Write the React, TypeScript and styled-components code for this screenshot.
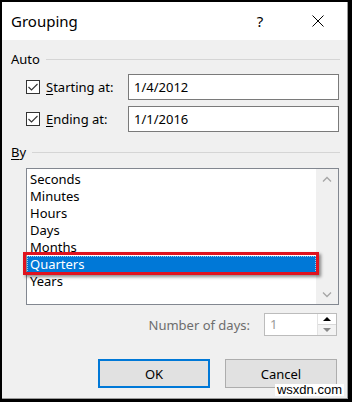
import React from "react";
import styled, { createGlobalStyle } from "styled-components";

const GlobalStyle = createGlobalStyle`
  html, body {
    margin: 0;
    padding: 0;
    background: #000;
  }
  body {
    font-family: "Noto Sans", "Open Sans", sans-serif;
    font-size: 13px;
    color: #000;
  }
`;

const units = ["Seconds", "Minutes", "Hours", "Days", "Months", "Quarters", "Years"];
const selectedUnit = "Quarters";

const Frame = styled.div`
  width: 352px;
  height: 402px;
  box-sizing: border-box;
  border-style: solid;
  border-color: #000;
  border-width: 2px 4px 3px 2px;
  position: relative;
`;

const Dialog = styled.div`
  height: 100%;
  box-sizing: border-box;
  display: flex;
  flex-direction: column;
  background: #f0f0f0;
  border-right: 1px solid #9a9a9a;
  border-bottom: 1px solid #9a9a9a;
`;

const TitleBar = styled.div`
  height: 38px;
  flex: none;
  display: flex;
  align-items: center;
  background: #fff;
  padding-left: 9px;
`;

const Title = styled.div`
  flex: 1;
  font-size: 15px;
  margin-top: -1px;
`;

const TitleButton = styled.div<{ $w: number; $gap?: number }>`
  width: ${(p) => p.$w}px;
  margin-left: ${(p) => p.$gap ?? 0}px;
  height: 38px;
  display: flex;
  align-items: center;
  justify-content: center;
  font-size: 15px;
`;

const Body = styled.div`
  flex: 1;
  display: flex;
  flex-direction: column;
  padding: 11px 8px 0 9px;
`;

const GroupHeader = styled.div`
  display: flex;
  align-items: center;
  height: 16px;
  line-height: 16px;
  &::after {
    content: "";
    flex: 1;
    height: 1px;
    background: #d5d5d5;
    margin: 0 -1px 0 6px;
  }
`;

const Underline = styled.span`
  text-decoration: underline;
  text-underline-offset: 2px;
`;

const DateRow = styled.div<{ $top: number }>`
  display: flex;
  align-items: center;
  height: 26px;
  margin-top: ${(p) => p.$top}px;
  padding-left: 15px;
`;

const CheckBox = styled.div`
  width: 14px;
  height: 14px;
  box-sizing: border-box;
  border: 1px solid #333;
  background: #fff;
  display: flex;
  align-items: center;
  justify-content: center;
  flex: none;
`;

const RowLabel = styled.label`
  width: 82px;
  margin-left: 6px;
  flex: none;
`;

const TextField = styled.div`
  flex: 1;
  height: 100%;
  box-sizing: border-box;
  border: 1px solid #7a7a7a;
  background: #fff;
  display: flex;
  align-items: center;
  padding-left: 5px;
`;

const ByHeader = styled(GroupHeader)`
  margin-top: 12px;
`;

const ListBox = styled.div`
  margin: 8px 0 0 15px;
  height: 137px;
  box-sizing: border-box;
  border: 1px solid #828790;
  background: #fff;
  display: flex;
`;

const Items = styled.div`
  flex: 1;
  padding-top: 2px;
`;

const Item = styled.div<{ $selected?: boolean }>`
  position: relative;
  height: 17px;
  line-height: 17px;
  padding-left: 3px;
  background: ${(p) => (p.$selected ? "#0078d7" : "transparent")};
  color: ${(p) => (p.$selected ? "#fff" : "#000")};
  outline: ${(p) => (p.$selected ? "1px dotted #9cc8f0" : "none")};
  outline-offset: -1px;
`;

const Highlight = styled.div`
  position: absolute;
  left: -4px;
  top: -4px;
  right: -3px;
  bottom: -2px;
  border: 3px solid #e0131f;
  box-shadow: 2px 2px 3px rgba(0, 0, 0, 0.45);
  pointer-events: none;
`;

const ScrollBar = styled.div`
  width: 22px;
  background: #f0f0f0;
  display: flex;
  flex-direction: column;
  justify-content: space-between;
  align-items: center;
  padding: 7px 0 6px;
`;

const NumberRow = styled.div`
  display: flex;
  justify-content: flex-end;
  align-items: center;
  margin-top: 8px;
  padding-right: 2px;
  height: 23px;
`;

const MutedLabel = styled.span`
  color: #6d6d6d;
  margin-right: 14px;
`;

const SpinBox = styled.div`
  width: 73px;
  height: 23px;
  box-sizing: border-box;
  border: 1px solid #bcbcbc;
  display: flex;
  background: #fff;
`;

const SpinValue = styled.div`
  flex: 1;
  color: #9a9a9a;
  padding-left: 5px;
  line-height: 21px;
`;

const SpinButtons = styled.div`
  width: 18px;
  display: flex;
  flex-direction: column;
  border-left: 1px solid #e3e3e3;
`;

const SpinHalf = styled.div<{ $bg: string }>`
  flex: 1;
  background: ${(p) => p.$bg};
  display: flex;
  align-items: center;
  justify-content: center;
  border-bottom: 1px solid #d9d9d9;
  &:last-child {
    border-bottom: none;
  }
`;

const ButtonRow = styled.div`
  display: flex;
  justify-content: flex-end;
  gap: 15px;
  margin-top: 23px;
  padding-right: 2px;
`;

const Button = styled.button<{ $default?: boolean }>`
  width: 112px;
  height: 29px;
  box-sizing: border-box;
  font-family: inherit;
  font-size: 13px;
  color: #000;
  background: #e1e1e1;
  border: ${(p) => (p.$default ? "2px solid #0078d7" : "1px solid #adadad")};
  padding: 0;
`;

const Watermark = styled.div`
  position: absolute;
  right: 4px;
  bottom: 3px;
  background: #fff;
  padding: 0 2px;
  font-family: "Liberation Sans", Arial, sans-serif;
  font-size: 13px;
  line-height: 12px;
  height: 12px;
`;

const Check = () => (
  <svg width="12" height="12" viewBox="0 0 12 12">
    <polyline points="1.5,6 4.5,9 10.5,3" fill="none" stroke="#333" strokeWidth="1.1" />
  </svg>
);

const Chevron = ({ up }: { up?: boolean }) => (
  <svg width="10" height="6" viewBox="0 0 10 6">
    <polyline
      points={up ? "1,5.5 5,1.5 9,5.5" : "1,0.5 5,4.5 9,0.5"}
      fill="none"
      stroke="#a6a6a6"
      strokeWidth="1.3"
    />
  </svg>
);

const Triangle = ({ up, color }: { up?: boolean; color: string }) => (
  <svg width="8" height="4" viewBox="0 0 8 4">
    <polygon points={up ? "0,4 4,0 8,4" : "0,0 4,4 8,0"} fill={color} />
  </svg>
);

const CloseIcon = () => (
  <svg width="12" height="12" viewBox="0 0 12 12">
    <path d="M0.5 0.5 L11.5 11.5 M11.5 0.5 L0.5 11.5" stroke="#000" strokeWidth="1" />
  </svg>
);

export default function App() {
  return (
    <>
      <GlobalStyle />
      <Frame>
        <Dialog>
          <TitleBar>
            <Title>Grouping</Title>
            <TitleButton $w={20}>?</TitleButton>
            <TitleButton $w={36} $gap={30}>
              <CloseIcon />
            </TitleButton>
            <TitleButton $w={11} />
          </TitleBar>
          <Body>
            <GroupHeader>Auto</GroupHeader>
            <DateRow $top={7}>
              <CheckBox>
                <Check />
              </CheckBox>
              <RowLabel>
                <Underline>S</Underline>tarting at:
              </RowLabel>
              <TextField>1/4/2012</TextField>
            </DateRow>
            <DateRow $top={6}>
              <CheckBox>
                <Check />
              </CheckBox>
              <RowLabel>
                <Underline>E</Underline>nding at:
              </RowLabel>
              <TextField>1/1/2016</TextField>
            </DateRow>
            <ByHeader>
              <Underline>B</Underline>y
            </ByHeader>
            <ListBox>
              <Items>
                {units.map((u) => (
                  <Item key={u} $selected={u === selectedUnit}>
                    {u}
                    {u === selectedUnit && <Highlight />}
                  </Item>
                ))}
              </Items>
              <ScrollBar>
                <Chevron up />
                <Chevron />
              </ScrollBar>
            </ListBox>
            <NumberRow>
              <MutedLabel>Number of days:</MutedLabel>
              <SpinBox>
                <SpinValue>1</SpinValue>
                <SpinButtons>
                  <SpinHalf $bg="#fff">
                    <Triangle up color="#000" />
                  </SpinHalf>
                  <SpinHalf $bg="#f3f3f3">
                    <Triangle color="#888" />
                  </SpinHalf>
                </SpinButtons>
              </SpinBox>
            </NumberRow>
            <ButtonRow>
              <Button $default>OK</Button>
              <Button>Cancel</Button>
            </ButtonRow>
          </Body>
        </Dialog>
        <Watermark>wsxdn.com</Watermark>
      </Frame>
    </>
  );
}
